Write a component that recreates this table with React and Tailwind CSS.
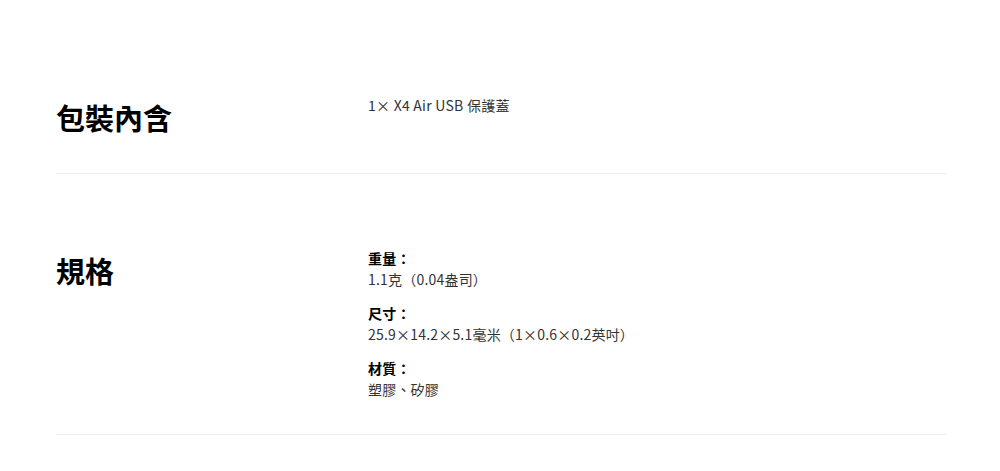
const SPECS = [
  { label: '重量：', value: '1.1克（0.04盎司）' },
  { label: '尺寸：', value: '25.9×14.2×5.1毫米（1×0.6×0.2英吋）' },
  { label: '材質：', value: '塑膠、矽膠' },
]

export default function App() {
  return (
    <div
      className="min-h-screen bg-white pl-[56px] pr-[54px] pt-[95px]"
      style={{ fontFamily: '"Noto Sans CJK TC", "Noto Sans", sans-serif' }}
    >
      {/* 包裝內含 */}
      <section className="flex pb-[34px] border-b border-[#f0f0f0]">
        <h2 className="w-[312px] shrink-0 text-[29px] leading-[44px] font-bold text-black">包裝內含</h2>
        <p className="text-[14px] leading-[21px] tracking-[0.25px] text-[#333]">1× X4 Air USB 保護蓋</p>
      </section>

      {/* 規格 */}
      <section className="flex pt-[74px] pb-[34px] border-b border-[#f0f0f0]">
        <h2 className="w-[312px] shrink-0 text-[29px] leading-[44px] font-bold text-black">規格</h2>
        <div className="flex flex-col gap-[13px]">
          {SPECS.map(s => (
            <div key={s.label} className="text-[14px] leading-[21px] tracking-[0.2px]">
              <div className="font-bold text-black">{s.label}</div>
              <div className="text-[#333]">{s.value}</div>
            </div>
          ))}
        </div>
      </section>
    </div>
  )
}
